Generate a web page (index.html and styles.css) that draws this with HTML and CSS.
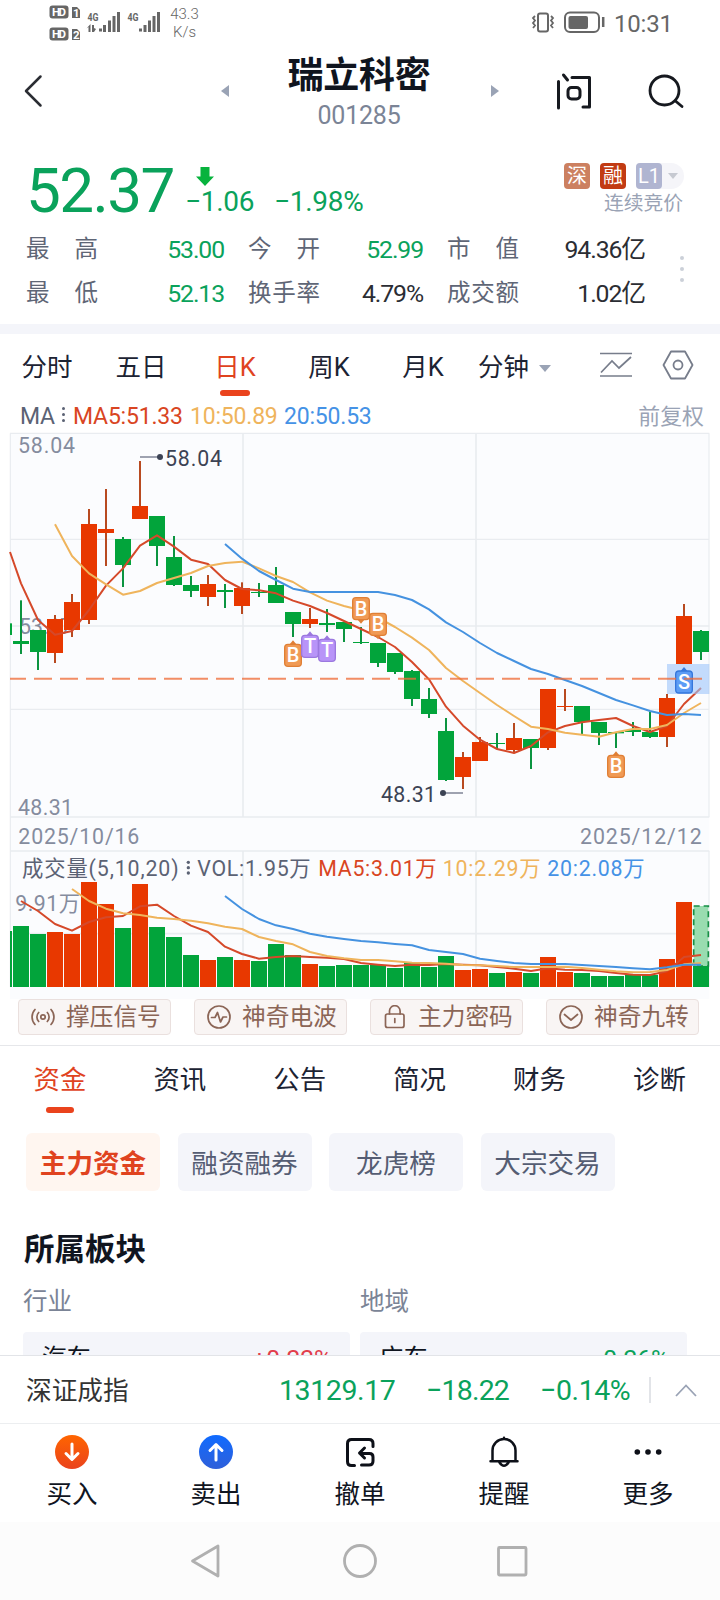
FILE: index.html
```html
<!DOCTYPE html>
<html lang="zh-CN">
<head>
<meta charset="utf-8">
<title>瑞立科密 001285</title>
<link rel="stylesheet" href="styles.css">
</head>
<body>
<div class="phone">
  <div class="statusbar">
    <svg class="status-left" width="119" height="46" viewBox="0 0 119 46">
      <g fill="#666">
        <rect x="1.5" y="5.5" width="19" height="13" rx="3"/>
        <rect x="1.5" y="27.500" width="19" height="13" rx="3"/>
        <path d="M24 7h5l3 3v8h-8zM24 29h5l3 3v8h-8z"/>
        <path d="M51 28.500h3v3h-3zM55 25h3v7h-3zM60 20.500h3V32h-3zM64.500 16h3v16h-3zM69 12h3v20h-3zM91 28.500h3v3h-3zM95.500 25h3v7h-3zM100 20.500h3V32h-3zM104.500 16h3v16h-3zM109 12h3v20h-3z"/>
        <path d="M42.500 24v8h-2v-5l-2 1.500zM44 25h2v3l2 1-2 3h-2z"/>
      </g>
      <g class="status-tiny">
        <text x="4" y="16" textLength="14" fill="#fff">HD</text>
        <text x="4" y="38" textLength="14" fill="#fff">HD</text>
        <text x="25" y="17" fill="#fff">1</text>
        <text x="25" y="39" fill="#fff">2</text>
        <text x="39.500" y="20.500" textLength="11" lengthAdjust="spacingAndGlyphs" fill="#666">4G</text>
        <text x="79.500" y="20.500" textLength="11" lengthAdjust="spacingAndGlyphs" fill="#666">4G</text>
      </g>
    </svg>
    <div class="speed"><span>43.3</span><span>K/s</span></div>
    <svg class="status-right" width="76" height="24" viewBox="0 0 76 24" fill="none" stroke="#666" stroke-width="2">
      <rect x="7" y="2.500" width="10" height="18" rx="2"/>
      <path d="M4 5l-2 2 2 2.500-2 2.500 2 2.500-2 2.500M20 5l2 2-2 2.500 2 2.500-2 2.500 2 2.500" stroke-width="1.800"/>
      <rect x="34" y="1.500" width="34" height="19.500" rx="5"/>
      <rect x="37.500" y="5" width="19.500" height="13" rx="2" fill="#666" stroke="none"/>
      <path d="M72.200 6v10" stroke-width="2.500"/>
    </svg>
    <span class="clock">10:31</span>
  </div>

  <header class="header">
    <svg class="back" width="24" height="36" viewBox="0 0 24 36" fill="none" stroke="#2b2d33" stroke-width="2.500" stroke-linecap="round" stroke-linejoin="round"><path d="M17.500 3.500L3 18l14.500 14.500"/></svg>
    <svg class="prev" width="8" height="12" viewBox="0 0 8 12"><path d="M8 0v12L0 6z" fill="#9aa3b5"/></svg>
    <div class="title">
      <h1>瑞立科密</h1>
      <p>001285</p>
    </div>
    <svg class="next" width="8" height="12" viewBox="0 0 8 12"><path d="M0 0v12l8-6z" fill="#9aa3b5"/></svg>
    <svg class="ask" width="38" height="40" viewBox="0 0 38 40" fill="none" stroke="#16191f" stroke-width="3" stroke-linecap="round" stroke-linejoin="round"><path d="M3.500 10.500V37M8.500 4l4 5M17 6.500h17.500V36H28"/><rect x="13" y="16.500" width="12" height="11.500" rx="3.500"/></svg>
    <svg class="search" width="40" height="40" viewBox="0 0 40 40" fill="none" stroke="#16191f" stroke-width="2.800" stroke-linecap="round"><circle cx="18.500" cy="18.500" r="14.500"/><path d="M29.500 29l6.500 5.500"/></svg>
  </header>

  <section class="quote">
    <div class="price-row">
      <span class="price">52.37</span>
      <div class="change">
        <svg width="18" height="20" viewBox="0 0 18 20"><path d="M4.500 0h9v9.500H18L9 19 0 9.500h4.500z" fill="#07b33d"/></svg>
        <div class="deltas"><span>−1.06</span><span>−1.98%</span></div>
      </div>
      <div class="badges">
        <div class="badge-line">
          <i class="badge badge-shen">深</i><i class="badge badge-rong">融</i>
          <span class="pill"><i class="badge badge-l1">L1</i><svg width="10" height="6" viewBox="0 0 10 6"><path d="M0 0h10L5 6z" fill="#c6c9d1"/></svg></span>
        </div>
        <div class="phase">连续竞价</div>
      </div>
    </div>
    <div class="stats">
      <span class="label"><b>最</b><b>高</b></span><span class="val down">53.00</span>
      <span class="label"><b>今</b><b>开</b></span><span class="val down">52.99</span>
      <span class="label"><b>市</b><b>值</b></span><span class="val">94.36亿</span>
      <span class="label"><b>最</b><b>低</b></span><span class="val down">52.13</span>
      <span class="label"><b>换</b><b>手</b><b>率</b></span><span class="val">4.79%</span>
      <span class="label"><b>成</b><b>交</b><b>额</b></span><span class="val">1.02亿</span>
      <span class="more-dots"><i></i><i></i><i></i></span>
    </div>
  </section>

  <nav class="periods">
    <span>分时</span><span>五日</span><span class="active">日K</span><span>周K</span><span>月K</span>
    <span class="minute">分钟 <svg width="12" height="7" viewBox="0 0 12 7"><path d="M0 0h12L6 7z" fill="#9aa3b5"/></svg></span>
    <svg class="trend" width="34" height="28" viewBox="0 0 34 28" fill="none" stroke="#777d8b" stroke-width="1.700"><path d="M1 2.500h32M1 25h32M2 21.500l11-11.500 7 7L32 6"/></svg>
    <svg class="gear" width="32" height="30" viewBox="0 0 32 30" fill="none" stroke="#777d8b" stroke-width="1.800" stroke-linejoin="round"><path d="M9 1.500h14L30.500 15 23 28.500H9L1.500 15z"/><circle cx="16" cy="15" r="4.500"/></svg>
  </nav>

  <div class="ma-row">
    <span class="ma-name">MA</span><span class="mini-dots"><i></i><i></i><i></i></span>
    <span class="ma5">MA5:51.33</span><span class="ma10">10:50.89</span><span class="ma20">20:50.53</span>
    <span class="adjust">前复权</span>
  </div>

  <svg class="chart" width="720" height="569" viewBox="0 0 2160 1707">
    <rect x="30" y="10" width="2098" height="1697" fill="#fbfcfe"/>
    <g fill="none" stroke="#e9ecf0" stroke-width="5">
      <path d="M30 588H2128M30 1161H2128M30 1263H2128M30 1511H2128M729 10V1161M1428 10V1161M729 1263V1671M1428 1263V1671"/>
      <path d="M30 10H2128M30 328H2128M30 838H2128M31 10V1671M2127 10V1161M2127 1263V1671" stroke-width="3.500"/>
    </g>
    <g class="axis">
      <text x="54" y="68" textLength="171">58.04</text>
      <text x="57" y="612" textLength="160">53.17</text>
      <text x="54" y="1154" textLength="165">48.31</text>
      <text x="55" y="1241" textLength="363">2025/10/16</text>
      <text x="1740" y="1241" textLength="365">2025/12/12</text>
      <text x="46" y="1444" textLength="194">9.91万</text>
    </g>
    <g class="vol-head">
      <text x="66" y="1338" textLength="470">成交量(5,10,20)</text>
      <g fill="#5b6274"><circle cx="565" cy="1297" r="5"/><circle cx="565" cy="1313" r="5"/><circle cx="565" cy="1329" r="5"/></g>
      <text x="592" y="1338" textLength="340">VOL:1.95万</text>
      <text x="955" y="1338" textLength="355" class="c5">MA5:3.01万</text>
      <text x="1328" y="1338" textLength="294" class="c10">10:2.29万</text>
      <text x="1642" y="1338" textLength="292" class="c20">20:2.08万</text>
    </g>
    <g id="candles"></g>
    <g id="volumes"></g>
    <g id="averages" fill="none" stroke-width="6" stroke-linejoin="round"></g>
    <rect x="2001" y="702" width="127" height="90" fill="#9ec4fa" fill-opacity=".6"/>
    <g id="markers"></g>
    <path d="M30 746H78M102 746H2106" fill="none" stroke="#f06d3a" stroke-opacity=".78" stroke-width="6" stroke-dasharray="54 24"/>
    <g class="extreme">
      <path d="M420 81H480" stroke="#8b90a0" stroke-width="5"/>
      <circle cx="480" cy="81" r="9"/><text x="495" y="107" textLength="171">58.04</text>
      <path d="M1329 1089H1389" stroke="#8b90a0" stroke-width="5"/>
      <circle cx="1329" cy="1089" r="9"/><text x="1143" y="1116" textLength="165">48.31</text>
    </g>
  </svg>

  <div class="signals">
    <span class="signal"><svg width="26" height="24" viewBox="0 0 26 24" class="line"><circle cx="13" cy="12" r="2.200"/><path d="M8.700 7.500a6.500 6.500 0 0 0 0 9M17.300 7.500a6.500 6.500 0 0 1 0 9M5 4.500a11 11 0 0 0 0 15M21 4.500a11 11 0 0 1 0 15"/></svg>撑压信号</span>
    <span class="signal"><svg width="26" height="24" viewBox="0 0 26 24" class="line"><circle cx="13" cy="12" r="11"/><path d="M5.500 12.500h3.500l2.500-5 3 9.500 2.500-5h3.500"/></svg>神奇电波</span>
    <span class="signal"><svg width="26" height="24" viewBox="0 0 26 24" class="line"><rect x="3.500" y="9" width="18.500" height="13.500" rx="2"/><path d="M7.500 9V6a5.300 5.300 0 0 1 10.600 0v3M12.800 13.500v4"/></svg>主力密码</span>
    <span class="signal"><svg width="26" height="24" viewBox="0 0 26 24" class="line"><circle cx="13" cy="12" r="11"/><path d="M6.500 9.500l6.500 5.500 6.500-5.500" stroke-width="1.800"/></svg>神奇九转</span>
  </div>

  <nav class="sections">
    <span class="active">资金</span><span>资讯</span><span>公告</span><span>简况</span><span>财务</span><span>诊断</span>
  </nav>
  <div class="chips">
    <span class="chip on">主力资金</span><span class="chip">融资融券</span><span class="chip">龙虎榜</span><span class="chip">大宗交易</span>
  </div>

  <section class="board">
    <h2>所属板块</h2>
    <div class="board-grid">
      <div><h3>行业</h3><div class="card"><span>汽车</span><span class="up">+0.22%</span></div></div>
      <div><h3>地域</h3><div class="card"><span>广东</span><span class="down">−0.26%</span></div></div>
    </div>
  </section>

  <div class="index-bar">
    <span class="index-name">深证成指</span><span class="n1">13129.17</span><span class="n2">−18.22</span><span class="n3">−0.14%</span>
    <i class="divider"></i>
    <svg width="22" height="13" viewBox="0 0 22 13" fill="none" stroke="#9aa3b5" stroke-width="1.800"><path d="M1 12L11 1.500 21 12"/></svg>
  </div>

  <nav class="actions">
    <span><svg width="36" height="36" viewBox="0 0 36 36"><defs><linearGradient id="buy" x2="0" y2="1"><stop stop-color="#ff6500"/><stop offset="1" stop-color="#ea431d"/></linearGradient></defs><circle cx="18" cy="18" r="17" fill="url(#buy)"/><path d="M18 10v15M12 19.500l6 6 6-6" fill="none" stroke="#fff" stroke-width="3" stroke-linecap="round" stroke-linejoin="round"/></svg>买入</span>
    <span><svg width="36" height="36" viewBox="0 0 36 36"><defs><linearGradient id="sell" x2="0" y2="1"><stop stop-color="#106bff"/><stop offset="1" stop-color="#2f5fd9"/></linearGradient></defs><circle cx="18" cy="18" r="17" fill="url(#sell)"/><path d="M18 26V11M12 16.500l6-6 6 6" fill="none" stroke="#fff" stroke-width="3" stroke-linecap="round" stroke-linejoin="round"/></svg>卖出</span>
    <span><svg width="36" height="36" viewBox="0 0 36 36" fill="none" stroke="#0d1018" stroke-width="3" stroke-linecap="round" stroke-linejoin="round"><path d="M12.500 31.500H9.500q-4 0-4-4V9.500q0-4 4-4h17.500q4 0 4 4v3"/><path d="M22.500 14l-5 5 5 5M18 19.500h9.500q3.500 0 3.500 3.500v4q0 4-4 4h-7.500"/></svg>撤单</span>
    <span><svg width="36" height="36" viewBox="0 0 36 36" fill="none" stroke="#0d1018" stroke-width="2.500" stroke-linecap="round"><path d="M6.500 27V16.500a11.500 11.500 0 0 1 23 0V27M4.500 27.300h27M18 3.800v1M13.500 28.500q4.500 6.500 9 0"/></svg>提醒</span>
    <span><svg width="36" height="36" viewBox="0 0 36 36" fill="#0d1018"><circle cx="7.300" cy="18" r="2.800"/><circle cx="18" cy="18" r="2.800"/><circle cx="28.700" cy="18" r="2.800"/></svg>更多</span>
  </nav>

  <div class="sysnav">
    <svg width="30" height="36" viewBox="0 0 30 36"><path d="M28 3v30L2.500 18z"/></svg>
    <svg width="36" height="36" viewBox="0 0 36 36"><circle cx="18" cy="18" r="15.500"/></svg>
    <svg width="32" height="36" viewBox="0 0 32 36"><rect x="2.500" y="4.500" width="27.500" height="27.500" rx="1"/></svg>
  </div>
</div>
<script src="chart.js"></script>
</body>
</html>
```
FILE: styles.css
```css
* { box-sizing: border-box; }
body { margin: 0; background: #fff; font-family: Roboto, "Noto Sans CJK SC", sans-serif; color: #1c2333; }
h1, h2, h3, p { margin: 0; font-weight: 400; }
i, b { font-style: normal; font-weight: 400; }
svg { display: block; flex: none; }
.phone { width: 720px; height: 1600px; overflow: hidden; display: flex; flex-direction: column; white-space: nowrap; }
.phone > * { flex: none; }

.statusbar { height: 46px; display: flex; align-items: flex-start; padding-left: 48px; color: #666; }
.status-tiny { font-size: 11.5px; font-weight: 700; }
.speed { width: 35px; padding-top: 5px; display: flex; flex-direction: column; align-items: center; font-size: 15px; line-height: 18px; font-weight: 300; }
.status-right { margin: 11px 0 0 329px; }
.clock { margin: 9px 0 0 7px; font-size: 24px; line-height: 30px; letter-spacing: -0.2px; }

.header { height: 98px; display: flex; align-items: flex-start; }
.back { margin: 27px 0 0 23px; }
.prev { margin: 39px 0 0 174px; }
.title { width: 260px; text-align: center; }
.title h1 { margin-top: 5px; font-size: 36px; line-height: 50px; font-weight: 700; letter-spacing: -0.2px; color: #10151f; }
.title p { font-size: 25px; line-height: 30px; letter-spacing: -0.2px; color: #7b8496; }
.next { margin: 39px 0 0 2px; }
.ask { margin: 25px 0 0 56px; }
.search { margin: 26px 0 0 53px; }

.quote { height: 190px; border-bottom: 10px solid #f4f5fa; }
.price-row { height: 83px; display: flex; color: #0aa25b; }
.price { width: 160px; padding-left: 26px; font-size: 62px; line-height: 94px; letter-spacing: -1.600px; }
.change { padding: 23px 0 0 27px; width: 405px; }
.change svg { margin-left: 9px; }
.deltas { display: flex; gap: 20px; margin: -2px 0 0 -2px; font-size: 28px; line-height: 34px; letter-spacing: -0.3px; }
.badges { width: 119px; padding-top: 19px; }
.badge-line { display: flex; gap: 10px; margin-left: -1px; }
.badge { width: 26px; height: 26px; border-radius: 4px; color: #fff; font-size: 20px; line-height: 26px; text-align: center; flex: none; }
.badge-shen { background: #cc8060; }
.badge-rong { background: #c23b13; }
.badge-l1 { background: #b0b5d1; }
.pill { display: flex; align-items: center; gap: 6px; width: 48px; background: #f5f5f9; border-radius: 4px 13px 13px 4px; }
.phase { padding-top: 2px; margin-left: 39px; font-size: 19.800px; line-height: 26px; color: #9aa3b5; }
.stats { position: relative; display: grid; grid-template-columns: 72px 126px 72px 127px 72px 150px; column-gap: 0; padding-left: 26px; grid-auto-rows: 44px; color: #2b2d33; }
.stats .label { display: flex; justify-content: space-between; font-size: 23.500px; line-height: 44px; color: #5f6676; width: 72px; }
.stats .val { text-align: right; font-size: 24.800px; line-height: 45px; letter-spacing: -1.100px; }
.stats .label:nth-of-type(6n+3) { margin-left: 24px; }
.stats .label:nth-of-type(6n+5) { margin-left: 24px; }
.stats .down, .card .down { color: #0aa25b; }
.more-dots { position: absolute; left: 680px; top: 29px; display: grid; gap: 7px; }
.more-dots i { width: 4px; height: 4px; border-radius: 50%; background: #cbd0d8; }

.periods { height: 65px; display: flex; font-size: 25.500px; line-height: 66px; color: #1c2333; }
.periods span { width: 94px; text-align: center; position: relative; }
.periods .active, .sections .active { color: #e0431f; }
.periods .active::after { content: ""; position: absolute; left: 32px; top: 56px; width: 30px; height: 6px; border-radius: 3px; background: #ea431d; }
.periods .minute { width: 129px; display: flex; align-items: center; gap: 10px; padding-left: 8px; }
.minute svg { margin-top: 4px; }
.trend { margin: 17px 0 0 0; }
.gear { margin: 16px 0 0 29px; }

.ma-row { height: 31px; display: flex; padding-left: 20px; font-size: 23px; line-height: 36px; letter-spacing: -0.200px; color: #5b6274; }
.ma-name { width: 42px; }
.mini-dots { width: 11px; display: grid; align-content: center; gap: 3px; }
.mini-dots i { width: 3px; height: 3px; border-radius: 50%; background: #5b6274; }
.ma5 { width: 117px; color: #d94522; }
.ma10 { width: 94px; color: #efb45c; }
.ma20 { color: #4592e6; }
.adjust { margin: 0 16px 0 auto; font-size: 21.900px; letter-spacing: 0; color: #9aa3b5; }

.chart { font-size: 64px; }
.axis { fill: #858c9e; }
.vol-head { fill: #5b6274; }
.vol-head .c5 { fill: #d94522; }
.vol-head .c10 { fill: #efb45c; }
.vol-head .c20 { fill: #4592e6; }
.extreme { fill: #3c4354; }
.marker-text { font-size: 60px; font-weight: 500; fill: #fff; text-anchor: middle; }

.signals { display: flex; gap: 23px; padding: 0 0 10px 18px; height: 47px; border-bottom: 1px solid #e6e7ea; }
.signal { width: 153px; height: 36px; display: flex; align-items: center; gap: 10px; padding-left: 11px; border: 1px solid #eae0de; border-radius: 4px; background: #f9f5f4; color: #8b6556; font-size: 23.700px; line-height: 36px; }
.line { fill: none; stroke: #8b6556; stroke-width: 1.700px; stroke-linecap: round; stroke-linejoin: round; }

.sections { height: 87px; display: grid; grid-template-columns: repeat(6, 119.900px); font-size: 26.400px; line-height: 68px; text-align: center; }
.sections span { position: relative; }
.sections .active::after { content: ""; position: absolute; left: 46px; top: 61px; width: 28px; height: 6px; border-radius: 3px; background: #ea431d; }
.chips { display: flex; gap: 17.500px; padding-left: 26px; }
.chip { width: 134px; height: 58px; border-radius: 6px; background: #f4f5fa; font-size: 26.600px; line-height: 61px; text-align: center; color: #555d73; }
.chip.on { background: #fff6f0; color: #e0431f; font-weight: 700; }

.board { height: 164px; overflow: hidden; padding: 37px 0 0 23px; }
.board h2 { padding-left: 1px; font-size: 30.500px; line-height: 44px; font-weight: 700; color: #10151f; }
.board-grid { display: grid; grid-template-columns: 327px 327px; gap: 10px; }
.board h3 { font-size: 24.500px; line-height: 60px; height: 60px; color: #7b8496; }
.card { height: 70px; display: flex; justify-content: space-between; padding: 5px 18px 0 19px; border-radius: 4px; background: #f4f5fa; font-size: 24.500px; line-height: 44px; color: #10151f; }
.card .up { color: #e23d4b; }

.index-bar { height: 69px; display: flex; align-items: center; border-top: 1px solid #e2e4e8; border-bottom: 1px solid #eceef0; padding-left: 26px; font-size: 28.500px; line-height: 40px; padding-top: 1px; letter-spacing: -0.400px; color: #0aa25b; }
.index-name { width: 253px; font-size: 25.700px; letter-spacing: 0; color: #333; margin-top: 1px; }
.index-bar .n1, .index-bar .n2, .index-bar .n3 { margin-top: 2px; }
.n1 { width: 147px; }
.n2 { width: 114px; letter-spacing: -0.800px; }
.n3 { width: 109px; }
.divider { width: 2px; height: 26px; margin: 0 24px 0 0; background: #e2e4e8; }
.actions { height: 98px; display: grid; grid-template-columns: repeat(5, 144px); color: #10151f; font-size: 25.500px; line-height: 36px; }
.actions span { display: flex; flex-direction: column; align-items: center; padding-top: 10px; gap: 6px; }
.sysnav { height: 78px; background: #fcfcfc; display: flex; padding: 21px 0 0 190px; }
.sysnav svg { fill: none; stroke: #b0b0b0; stroke-width: 2.800px; stroke-linejoin: round; }
.sysnav svg + svg { margin-left: 122px; }
.sysnav svg + svg + svg { margin-left: 118px; }
```
FILE: chart.js
```js
const NS = "http://www.w3.org/2000/svg";
const PITCH = 51, BODY = 48, FIRST = 39;
const RED = "#e83800", GREEN = "#02a43b";

function add(parent, tag, attrs, text) {
  const el = document.createElementNS(NS, tag);
  for (const key in attrs) el.setAttribute(key, attrs[key]);
  if (text) el.textContent = text;
  document.getElementById(parent).appendChild(el);
}

// [direction, body top, body bottom, wick top, wick bottom, volume top]
const days = [
  ["g",633,642,511,672,348],["g",600,666,600,720,372],["r",567,669,555,699,366],["r",516,600,492,621,372],
  ["r",282,570,237,582,216],["r",297,309,177,408,282],["g",327,405,321,471,354],["r",228,267,93,267,222],
  ["g",258,348,258,408,351],["g",381,465,318,468,381],["g",465,483,438,501,435],["r",462,501,435,528,450],
  ["g",480,486,462,534,441],["r",474,528,457,552,450],["g",486,489,459,501,453],["g",465,519,411,519,402],
  ["g",546,582,546,621,435],["r",567,582,534,594,462],["g",579,585,537,606,468],["g",576,597,576,636,465],
  ["g",636,639,591,642,465],["g",639,699,639,711,465],["g",669,726,669,732,474],["g",723,807,720,828,459],
  ["g",807,852,774,864,471],["g",903,1050,864,1053,438],["r",981,1041,966,1077,480],["r",936,993,921,993,477],
  ["g",939,942,909,957,489],["r",924,960,879,966,486],["g",927,954,927,1017,489],["r",777,954,777,960,441],
  ["r",828,831,777,843,486],["g",828,876,828,912,489],["g",876,909,876,945,498],["g",906,910,906,954,498],
  ["g",900,906,876,918,495],["g",906,921,846,924,495],["r",804,921,792,951,447],["r",558,702,522,702,276],
  ["g",603,666,600,690,468]
];

add("candles", "rect", { x: 30, y: 580, width: 6, height: 35, fill: GREEN });
add("volumes", "rect", { x: 30, y: 1503, width: 6, height: 168, fill: GREEN });
days.forEach(([dir, top, bottom, high, low, vol], k) => {
  const x = FIRST + PITCH * k;
  const fill = dir === "r" ? RED : GREEN;
  add("candles", "rect", { x: x + 21, y: high, width: 6, height: low - high, fill: dir === "r" ? "#b84a20" : "#0b9440" });
  add("candles", "rect", { x, y: top, width: BODY, height: bottom - top, fill });
  add("volumes", "rect", { x, y: vol + 1140, width: BODY, height: 531 - vol, fill });
});
add("volumes", "rect", { x: 2081, y: 1428, width: 44, height: 180, fill: "#99dcb0", stroke: "#168f45", "stroke-width": 5, "stroke-dasharray": "18 12" });

const C5 = "#d5492a", C10 = "#efb45c", C20 = "#4592e0";
// Averages: [colour, index of first day, vertical offset, values]
[
  [C5, 0, 0, [460,570,614,603,540,467,415,347,316,350,389,402,450,477,481,490,512,528,549,573,597,621,651,696,748,830,887,929,957,969,948,907,888,877,870,864,888,906,888,822,774]],
  [C10, 2, 0, [283,378,430,463,494,483,459,444,429,408,399,395,415,438,456,487,512,528,541,563,591,623,660,714,753,789,825,858,890,897,908,914,920,907,897,897,885,849,819]],
  [C20, 12, 0, [342,386,423,450,476,486,486,486,486,486,495,510,538,577,606,639,669,693,717,732,750,768,789,810,826,843,855,852,855]],
  [C5, 0, 1140, [273,303,342,362,336,322,318,289,284,318,347,366,410,432,446,441,438,441,443,447,459,464,468,464,465,462,464,466,471,476,483,475,479,480,483,489,494,495,484,441,435]],
  [C10, 3, 1140, [237,273,296,310,315,323,327,332,340,350,357,381,393,403,426,438,445,450,450,454,458,459,461,465,466,468,471,471,471,470,474,479,484,487,486,480,463,459]],
  [C20, 12, 1140, [258,297,327,346,357,371,380,387,393,397,402,406,420,426,432,446,453,459,462,462,462,465,468,471,475,478,472,464,464]]
].forEach(([stroke, start, dy, values]) => {
  const points = values.map((v, i) => `${FIRST + 24 + PITCH * (start + i)},${v + dy}`);
  if (start === 0 && dy === 0) points.unshift("30,366");
  add("averages", "polyline", { points: points.join(" "), stroke });
});

// Trade markers: [letter, centre x, box top, arrow direction, fill, border]
[
  ["B",879,643,"up","#f09a55","#e07f35"],["T",930,616,"up","#b894f8","#9b78df"],["T",981,628,"up","#b894f8","#9b78df"],
  ["B",1083,503,"down","#f09a55","#e07f35"],["B",1134,550,"down","#f09a55","#e07f35"],["B",1848,976,"up","#f09a55","#e07f35"],
  ["S",2052,723,"up","#5d9cf5","#3577dc"]
].forEach(([letter, cx, y, dir, fill, stroke]) => {
  const tip = dir === "up" ? `M${cx - 10} ${y}l10 -12 10 12z` : `M${cx - 10} ${y + 66}l10 12 10 -12z`;
  add("markers", "path", { d: tip, fill: stroke });
  add("markers", "rect", { x: cx - 25, y, width: 50, height: 66, rx: 10, fill, stroke, "stroke-width": 4 });
  add("markers", "text", { x: cx, y: y + 54, class: "marker-text" }, letter);
});
```
